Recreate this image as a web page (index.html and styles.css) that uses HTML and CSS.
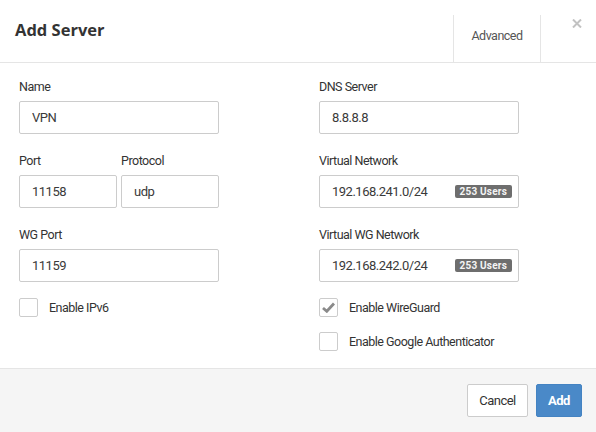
FILE: index.html
```html
<!DOCTYPE html>
<html lang="en">
<head>
    <meta charset="UTF-8">
    <title>Add Server</title>
    <link rel="stylesheet" href="styles.css">
</head>
<body>
    <div class="modal">
        <div class="modal-header">
            <h3 class="modal-title">Add Server</h3>
            <div class="header-tabs">
                <div class="tab">Advanced</div>
            </div>
            <button class="close">
                <svg width="10" height="9" viewBox="0 0 10 9"><path d="M1 0.5 L9 8.5 M9 0.5 L1 8.5" stroke="#c2c2c2" stroke-width="2"/></svg>
            </button>
        </div>

        <div class="modal-body">
            <div class="col">
                <div class="field">
                    <label>Name</label>
                    <input type="text" class="input" value="VPN">
                </div>
                <div class="field-row">
                    <div class="field">
                        <label>Port</label>
                        <input type="text" class="input" value="11158">
                    </div>
                    <div class="field">
                        <label>Protocol</label>
                        <input type="text" class="input" value="udp">
                    </div>
                </div>
                <div class="field">
                    <label>WG Port</label>
                    <input type="text" class="input" value="11159">
                </div>
                <div class="check">
                    <span class="box"></span>
                    <span>Enable IPv6</span>
                </div>
            </div>

            <div class="col">
                <div class="field">
                    <label>DNS Server</label>
                    <input type="text" class="input" value="8.8.8.8">
                </div>
                <div class="field">
                    <label>Virtual Network</label>
                    <div class="input input-badge">
                        <span>192.168.241.0/24</span>
                        <span class="badge">253 Users</span>
                    </div>
                </div>
                <div class="field">
                    <label>Virtual WG Network</label>
                    <div class="input input-badge">
                        <span>192.168.242.0/24</span>
                        <span class="badge">253 Users</span>
                    </div>
                </div>
                <div class="check">
                    <span class="box">
                        <svg width="13" height="11" viewBox="0 0 13 11"><path d="M1 6 L4.8 9.3 L12 1.5" fill="none" stroke="#8a8a8a" stroke-width="2.8"/></svg>
                    </span>
                    <span>Enable WireGuard</span>
                </div>
                <div class="check">
                    <span class="box"></span>
                    <span>Enable Google Authenticator</span>
                </div>
            </div>
        </div>

        <div class="modal-footer">
            <button class="btn btn-default">Cancel</button>
            <button class="btn btn-primary">Add</button>
        </div>
    </div>
</body>
</html>
```

FILE: styles.css
```css
body {
    margin: 0;
    padding: 0;
    background-color: #fff;
    font-family: Roboto, "Liberation Sans", sans-serif;
    font-size: 12.5px;
    letter-spacing: -0.5px;
    color: #333;
}

.modal {
    width: 596px;
    height: 432px;
    display: flex;
    flex-direction: column;
}

.modal-header {
    height: 62px;
    border-bottom: 1px solid #e5e5e5;
    display: flex;
    align-items: flex-end;
}

.modal-title {
    margin: 0;
    align-self: flex-start;
    padding: 18px 0 0 15px;
    font-family: "Open Sans", sans-serif;
    font-size: 16.5px;
    font-weight: bold;
    letter-spacing: 0;
    color: #333;
    flex: 1;
}

.header-tabs {
    display: flex;
    height: 47px;
}

.tab {
    width: 88px;
    border-left: 1px solid #e5e5e5;
    border-right: 1px solid #e5e5e5;
    text-align: center;
    padding-top: 13px;
    box-sizing: border-box;
    color: #555;
}

.close {
    align-self: flex-start;
    background: none;
    border: none;
    width: 55px;
    padding: 19px 0 0 31px;
    text-align: left;
    line-height: 0;
}

.modal-body {
    flex: 1;
    display: grid;
    grid-template-columns: 200px 200px;
    column-gap: 100px;
    padding: 15px 0 0 19px;
}

.col {
    display: flex;
    flex-direction: column;
}

.field {
    display: flex;
    flex-direction: column;
    margin-bottom: 18px;
}

.field label {
    line-height: 17px;
    margin-bottom: 6px;
    color: #333;
}

.field-row {
    display: flex;
    gap: 4px;
}

.field-row .field {
    width: 98px;
}

.input {
    height: 33px;
    box-sizing: border-box;
    border: 1px solid #ccc;
    border-radius: 2px;
    padding: 0 12px;
    font-family: inherit;
    font-size: 13px;
    letter-spacing: -0.5px;
    color: #3a3a3a;
    width: 100%;
    margin: 0;
}

.input-badge {
    display: flex;
    align-items: center;
    justify-content: space-between;
    padding-right: 6px;
}

.badge {
    background-color: #6e6e6e;
    color: #f4f4f4;
    font-size: 10px;
    font-weight: bold;
    letter-spacing: 0.2px;
    line-height: 13px;
    padding: 0 5px;
    border-radius: 2px;
}

.check {
    display: flex;
    align-items: center;
    gap: 11px;
    height: 19px;
    margin-bottom: 17px;
    margin-top: -2px;
}

.box {
    width: 17px;
    height: 17px;
    border: 1px solid #ccc;
    border-radius: 2px;
    display: flex;
    align-items: center;
    justify-content: center;
}

.modal-footer {
    height: 64px;
    border-top: 1px solid #e5e5e5;
    background-color: #f5f5f5;
    display: flex;
    align-items: center;
    justify-content: flex-end;
    gap: 8px;
    padding-right: 14px;
}

.btn {
    height: 33px;
    border-radius: 2px;
    font-family: inherit;
    font-size: 13px;
    letter-spacing: -0.5px;
    padding: 0;
    cursor: pointer;
}

.btn-default {
    background-color: #fff;
    border: 1px solid #ccc;
    color: #333;
    width: 61px;
}

.btn-primary {
    background-color: #4a89c8;
    border: 1px solid #4483c2;
    color: #fff;
    font-weight: bold;
    width: 46px;
}
```
